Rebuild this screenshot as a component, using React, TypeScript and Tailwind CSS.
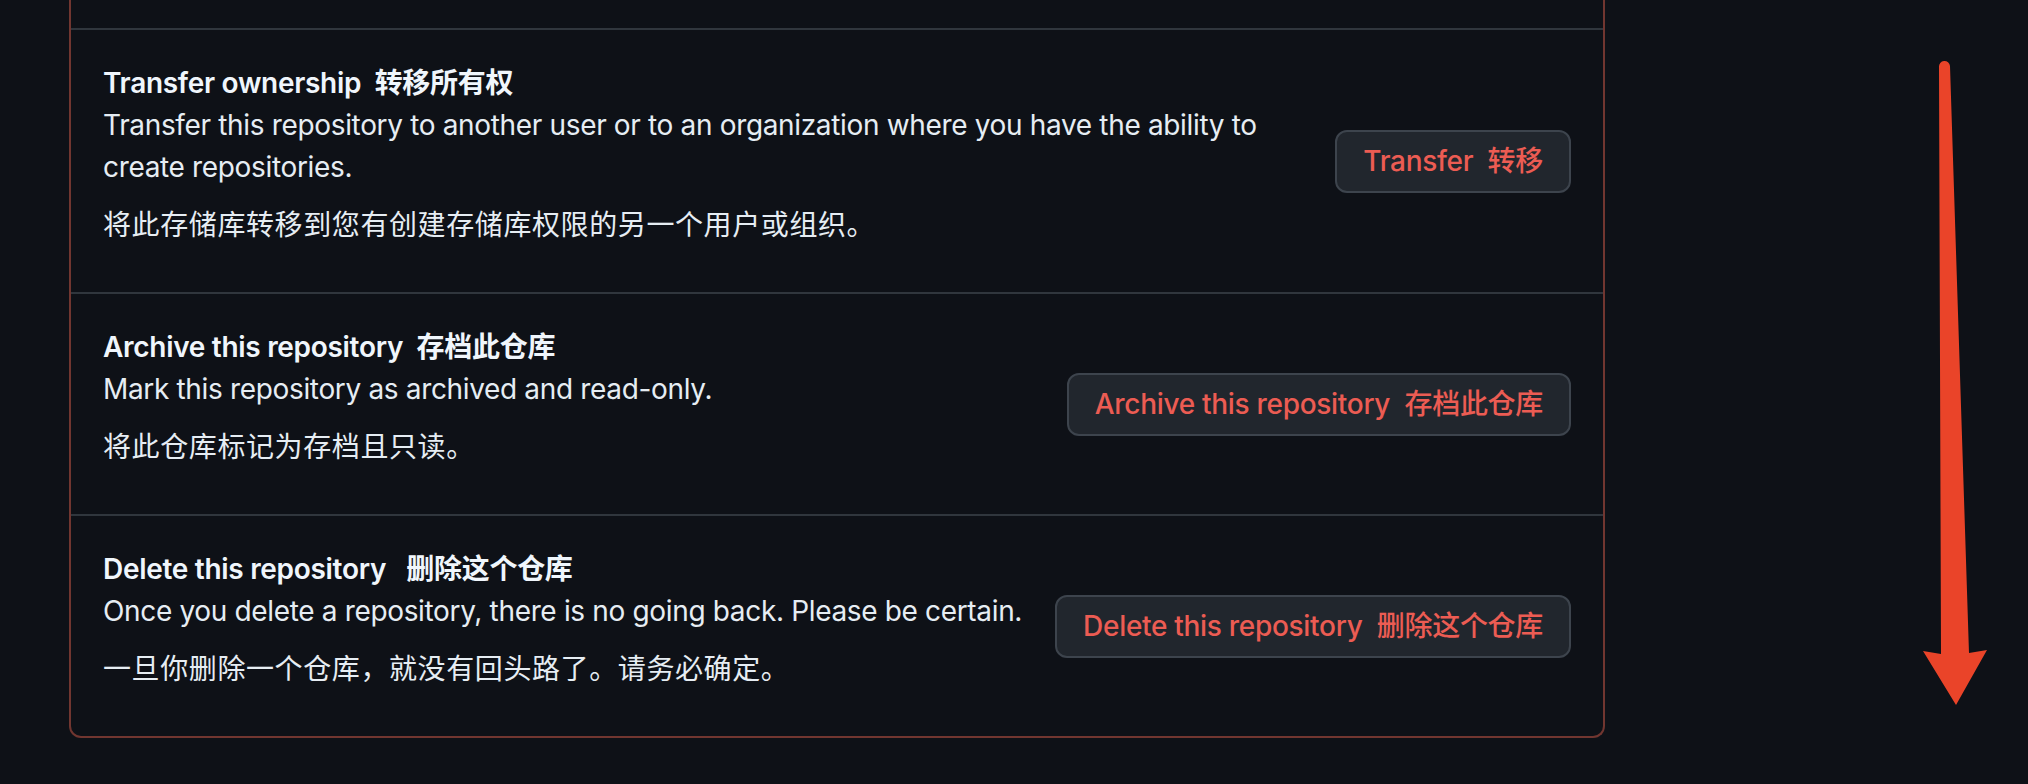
const rows = [
  {
    title: "Transfer ownership\u00a0\u00a0转移所有权",
    desc: "Transfer this repository to another user or to an organization where you have the ability to create repositories.",
    zh: "将此存储库转移到您有创建存储库权限的另一个用户或组织。",
    button: "Transfer\u00a0\u00a0转移",
  },
  {
    title: "Archive this repository\u00a0\u00a0存档此仓库",
    desc: "Mark this repository as archived and read-only.",
    zh: "将此仓库标记为存档且只读。",
    button: "Archive this repository\u00a0\u00a0存档此仓库",
  },
  {
    title: "Delete this repository\u00a0\u00a0\u00a0删除这个仓库",
    desc: "Once you delete a repository, there is no going back. Please be certain.",
    zh: "一旦你删除一个仓库，就没有回头路了。请务必确定。",
    button: "Delete this repository\u00a0\u00a0删除这个仓库",
  },
];

function DangerRow({ row, last }: { row: (typeof rows)[number]; last: boolean }) {
  return (
    <div
      className={`flex items-center px-[32px] ${
        last ? "" : "border-b-2 border-[#30363d]"
      }`}
    >
      <div className="min-w-0 flex-1 pt-[32px] pb-[46px]">
        <div className="text-[28px] font-semibold leading-[42px] tracking-[-0.3px] text-[#f0f6fc]">
          {row.title}
        </div>
        <p className="text-[28px] leading-[42px] tracking-[-0.34px] text-[#e6edf3]">
          {row.desc}
        </p>
        <p className="mt-[16px] text-[28px] leading-[42px] tracking-[0.6px] text-[#e6edf3]">
          {row.zh}
        </p>
      </div>
      <button className="ml-[32px] h-[63px] shrink-0 rounded-[12px] border-2 border-[#3d444d] bg-[#21262d] px-[26px] text-[28px] font-medium tracking-[-0.3px] whitespace-nowrap text-[#ec5c53]">
        {row.button}
      </button>
    </div>
  );
}

export default function App() {
  return (
    <div className="relative h-[784px] w-full overflow-hidden bg-[#0e1117] font-['Inter','Noto_Sans_CJK_SC',sans-serif]">
      <div className="ml-[69px] w-[1536px] rounded-b-[12px] border-x-2 border-b-2 border-[#713630]">
        <div className="h-[30px] border-b-2 border-[#30363d]" />
        {rows.map((row, i) => (
          <DangerRow key={i} row={row} last={i === rows.length - 1} />
        ))}
      </div>

      {/* annotation arrow */}
      <svg
        className="pointer-events-none absolute top-[50px] left-[1910px] h-[670px] w-[90px]"
        viewBox="1910 50 90 670"
      >
        <path
          d="M1939 67 A5.5 5.5 0 0 1 1950 66 L1969 653 L1987 650 L1956 705 L1923 651 L1941 654 Z"
          fill="#ea4429"
        />
      </svg>
    </div>
  );
}
